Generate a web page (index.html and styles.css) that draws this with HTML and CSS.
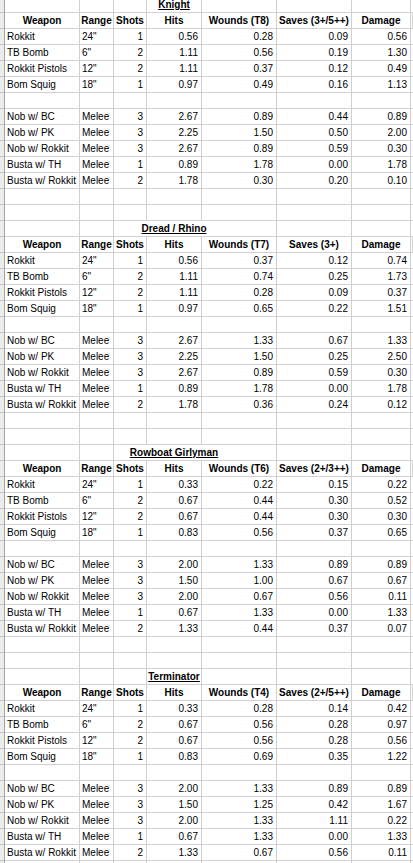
FILE: index.html
```html
<!DOCTYPE html>
<html>
<head>
<meta charset="utf-8">
<title>Weapon Damage</title>
<link rel="stylesheet" href="styles.css">
</head>
<body>
<div class="sheet">

<div class="row"><i></i><span></span><span></span><span></span><span class="t"><b>Knight</b></span><span></span><span></span><span></span><span></span></div>
<div class="row hd"><i></i><span>Weapon</span><span>Range</span><span>Shots</span><span>Hits</span><span>Wounds (T8)</span><span>Saves (3+/5++)</span><span>Damage</span><span></span></div>
<div class="row"><i></i><span>Rokkit</span><span>24&quot;</span><span class="n">1</span><span class="n">0.56</span><span class="n">0.28</span><span class="n">0.09</span><span class="n">0.56</span><span></span></div>
<div class="row"><i></i><span>TB Bomb</span><span>6&quot;</span><span class="n">2</span><span class="n">1.11</span><span class="n">0.56</span><span class="n">0.19</span><span class="n">1.30</span><span></span></div>
<div class="row"><i></i><span>Rokkit Pistols</span><span>12&quot;</span><span class="n">2</span><span class="n">1.11</span><span class="n">0.37</span><span class="n">0.12</span><span class="n">0.49</span><span></span></div>
<div class="row"><i></i><span>Bom Squig</span><span>18&quot;</span><span class="n">1</span><span class="n">0.97</span><span class="n">0.49</span><span class="n">0.16</span><span class="n">1.13</span><span></span></div>
<div class="row"><i></i><span></span><span></span><span></span><span></span><span></span><span></span><span></span><span></span></div>
<div class="row"><i></i><span>Nob w/ BC</span><span>Melee</span><span class="n">3</span><span class="n">2.67</span><span class="n">0.89</span><span class="n">0.44</span><span class="n">0.89</span><span></span></div>
<div class="row"><i></i><span>Nob w/ PK</span><span>Melee</span><span class="n">3</span><span class="n">2.25</span><span class="n">1.50</span><span class="n">0.50</span><span class="n">2.00</span><span></span></div>
<div class="row"><i></i><span>Nob w/ Rokkit</span><span>Melee</span><span class="n">3</span><span class="n">2.67</span><span class="n">0.89</span><span class="n">0.59</span><span class="n">0.30</span><span></span></div>
<div class="row"><i></i><span>Busta w/ TH</span><span>Melee</span><span class="n">1</span><span class="n">0.89</span><span class="n">1.78</span><span class="n">0.00</span><span class="n">1.78</span><span></span></div>
<div class="row"><i></i><span>Busta w/ Rokkit</span><span>Melee</span><span class="n">2</span><span class="n">1.78</span><span class="n">0.30</span><span class="n">0.20</span><span class="n">0.10</span><span></span></div>
<div class="row"><i></i><span></span><span></span><span></span><span></span><span></span><span></span><span></span><span></span></div>
<div class="row"><i></i><span></span><span></span><span></span><span></span><span></span><span></span><span></span><span></span></div>

<div class="row"><i></i><span></span><span></span><span></span><span class="t"><b>Dread / Rhino</b></span><span></span><span></span><span></span><span></span></div>
<div class="row hd"><i></i><span>Weapon</span><span>Range</span><span>Shots</span><span>Hits</span><span>Wounds (T7)</span><span>Saves (3+)</span><span>Damage</span><span></span></div>
<div class="row"><i></i><span>Rokkit</span><span>24&quot;</span><span class="n">1</span><span class="n">0.56</span><span class="n">0.37</span><span class="n">0.12</span><span class="n">0.74</span><span></span></div>
<div class="row"><i></i><span>TB Bomb</span><span>6&quot;</span><span class="n">2</span><span class="n">1.11</span><span class="n">0.74</span><span class="n">0.25</span><span class="n">1.73</span><span></span></div>
<div class="row"><i></i><span>Rokkit Pistols</span><span>12&quot;</span><span class="n">2</span><span class="n">1.11</span><span class="n">0.28</span><span class="n">0.09</span><span class="n">0.37</span><span></span></div>
<div class="row"><i></i><span>Bom Squig</span><span>18&quot;</span><span class="n">1</span><span class="n">0.97</span><span class="n">0.65</span><span class="n">0.22</span><span class="n">1.51</span><span></span></div>
<div class="row"><i></i><span></span><span></span><span></span><span></span><span></span><span></span><span></span><span></span></div>
<div class="row"><i></i><span>Nob w/ BC</span><span>Melee</span><span class="n">3</span><span class="n">2.67</span><span class="n">1.33</span><span class="n">0.67</span><span class="n">1.33</span><span></span></div>
<div class="row"><i></i><span>Nob w/ PK</span><span>Melee</span><span class="n">3</span><span class="n">2.25</span><span class="n">1.50</span><span class="n">0.25</span><span class="n">2.50</span><span></span></div>
<div class="row"><i></i><span>Nob w/ Rokkit</span><span>Melee</span><span class="n">3</span><span class="n">2.67</span><span class="n">0.89</span><span class="n">0.59</span><span class="n">0.30</span><span></span></div>
<div class="row"><i></i><span>Busta w/ TH</span><span>Melee</span><span class="n">1</span><span class="n">0.89</span><span class="n">1.78</span><span class="n">0.00</span><span class="n">1.78</span><span></span></div>
<div class="row"><i></i><span>Busta w/ Rokkit</span><span>Melee</span><span class="n">2</span><span class="n">1.78</span><span class="n">0.36</span><span class="n">0.24</span><span class="n">0.12</span><span></span></div>
<div class="row"><i></i><span></span><span></span><span></span><span></span><span></span><span></span><span></span><span></span></div>
<div class="row"><i></i><span></span><span></span><span></span><span></span><span></span><span></span><span></span><span></span></div>

<div class="row"><i></i><span></span><span></span><span></span><span class="t"><b>Rowboat Girlyman</b></span><span></span><span></span><span></span><span></span></div>
<div class="row hd"><i></i><span>Weapon</span><span>Range</span><span>Shots</span><span>Hits</span><span>Wounds (T6)</span><span>Saves (2+/3++)</span><span>Damage</span><span></span></div>
<div class="row"><i></i><span>Rokkit</span><span>24&quot;</span><span class="n">1</span><span class="n">0.33</span><span class="n">0.22</span><span class="n">0.15</span><span class="n">0.22</span><span></span></div>
<div class="row"><i></i><span>TB Bomb</span><span>6&quot;</span><span class="n">2</span><span class="n">0.67</span><span class="n">0.44</span><span class="n">0.30</span><span class="n">0.52</span><span></span></div>
<div class="row"><i></i><span>Rokkit Pistols</span><span>12&quot;</span><span class="n">2</span><span class="n">0.67</span><span class="n">0.44</span><span class="n">0.30</span><span class="n">0.30</span><span></span></div>
<div class="row"><i></i><span>Bom Squig</span><span>18&quot;</span><span class="n">1</span><span class="n">0.83</span><span class="n">0.56</span><span class="n">0.37</span><span class="n">0.65</span><span></span></div>
<div class="row"><i></i><span></span><span></span><span></span><span></span><span></span><span></span><span></span><span></span></div>
<div class="row"><i></i><span>Nob w/ BC</span><span>Melee</span><span class="n">3</span><span class="n">2.00</span><span class="n">1.33</span><span class="n">0.89</span><span class="n">0.89</span><span></span></div>
<div class="row"><i></i><span>Nob w/ PK</span><span>Melee</span><span class="n">3</span><span class="n">1.50</span><span class="n">1.00</span><span class="n">0.67</span><span class="n">0.67</span><span></span></div>
<div class="row"><i></i><span>Nob w/ Rokkit</span><span>Melee</span><span class="n">3</span><span class="n">2.00</span><span class="n">0.67</span><span class="n">0.56</span><span class="n">0.11</span><span></span></div>
<div class="row"><i></i><span>Busta w/ TH</span><span>Melee</span><span class="n">1</span><span class="n">0.67</span><span class="n">1.33</span><span class="n">0.00</span><span class="n">1.33</span><span></span></div>
<div class="row"><i></i><span>Busta w/ Rokkit</span><span>Melee</span><span class="n">2</span><span class="n">1.33</span><span class="n">0.44</span><span class="n">0.37</span><span class="n">0.07</span><span></span></div>
<div class="row"><i></i><span></span><span></span><span></span><span></span><span></span><span></span><span></span><span></span></div>
<div class="row"><i></i><span></span><span></span><span></span><span></span><span></span><span></span><span></span><span></span></div>

<div class="row"><i></i><span></span><span></span><span></span><span class="t"><b>Terminator</b></span><span></span><span></span><span></span><span></span></div>
<div class="row hd"><i></i><span>Weapon</span><span>Range</span><span>Shots</span><span>Hits</span><span>Wounds (T4)</span><span>Saves (2+/5++)</span><span>Damage</span><span></span></div>
<div class="row"><i></i><span>Rokkit</span><span>24&quot;</span><span class="n">1</span><span class="n">0.33</span><span class="n">0.28</span><span class="n">0.14</span><span class="n">0.42</span><span></span></div>
<div class="row"><i></i><span>TB Bomb</span><span>6&quot;</span><span class="n">2</span><span class="n">0.67</span><span class="n">0.56</span><span class="n">0.28</span><span class="n">0.97</span><span></span></div>
<div class="row"><i></i><span>Rokkit Pistols</span><span>12&quot;</span><span class="n">2</span><span class="n">0.67</span><span class="n">0.56</span><span class="n">0.28</span><span class="n">0.56</span><span></span></div>
<div class="row"><i></i><span>Bom Squig</span><span>18&quot;</span><span class="n">1</span><span class="n">0.83</span><span class="n">0.69</span><span class="n">0.35</span><span class="n">1.22</span><span></span></div>
<div class="row"><i></i><span></span><span></span><span></span><span></span><span></span><span></span><span></span><span></span></div>
<div class="row"><i></i><span>Nob w/ BC</span><span>Melee</span><span class="n">3</span><span class="n">2.00</span><span class="n">1.33</span><span class="n">0.89</span><span class="n">0.89</span><span></span></div>
<div class="row"><i></i><span>Nob w/ PK</span><span>Melee</span><span class="n">3</span><span class="n">1.50</span><span class="n">1.25</span><span class="n">0.42</span><span class="n">1.67</span><span></span></div>
<div class="row"><i></i><span>Nob w/ Rokkit</span><span>Melee</span><span class="n">3</span><span class="n">2.00</span><span class="n">1.33</span><span class="n">1.11</span><span class="n">0.22</span><span></span></div>
<div class="row"><i></i><span>Busta w/ TH</span><span>Melee</span><span class="n">1</span><span class="n">0.67</span><span class="n">1.33</span><span class="n">0.00</span><span class="n">1.33</span><span></span></div>
<div class="row"><i></i><span>Busta w/ Rokkit</span><span>Melee</span><span class="n">2</span><span class="n">1.33</span><span class="n">0.67</span><span class="n">0.56</span><span class="n">0.11</span><span></span></div>
<div class="row"><i></i><span></span><span></span><span></span><span></span><span></span><span></span><span></span><span></span></div>
<div class="row"><i></i><span></span><span></span><span></span><span></span><span></span><span></span><span></span><span></span></div>

</div>
</body>
</html>
```

FILE: styles.css
```css
html, body {
  margin: 0;
  padding: 0;
  background: #ffffff;
  overflow: hidden;
}

.sheet {
  margin-top: -3px;
  font-family: "Liberation Sans", Arial, sans-serif;
  font-size: 10px;
  color: #000000;
}

.row {
  display: grid;
  grid-template-columns: 5px 75px 34px 33px 55px 75px 75px 59px 1fr;
  height: 16px;
}

.row > * {
  box-sizing: border-box;
  height: 16px;
  border-right: 1px solid #d0d0d0;
  border-bottom: 1px solid #d0d0d0;
  padding: 0 3px 0 2px;
  line-height: 15px;
  white-space: nowrap;
  overflow: hidden;
  text-align: left;
}

.row > i {
  background: #ececec;
  border-right: 1px solid #a3a3a3;
  border-bottom: 1px solid #c4c4c4;
  padding: 0;
}

.row > .n {
  text-align: right;
}

.hd > span {
  font-weight: bold;
  text-align: center;
  padding: 0;
}

.row > .t {
  display: flex;
  justify-content: center;
  overflow: visible;
  padding: 0;
}

.t > b {
  display: inline-block;
  height: 15px;
  background: #ffffff;
  padding: 0 1px;
  text-decoration: underline;
  text-underline-offset: 1px;
}
```
